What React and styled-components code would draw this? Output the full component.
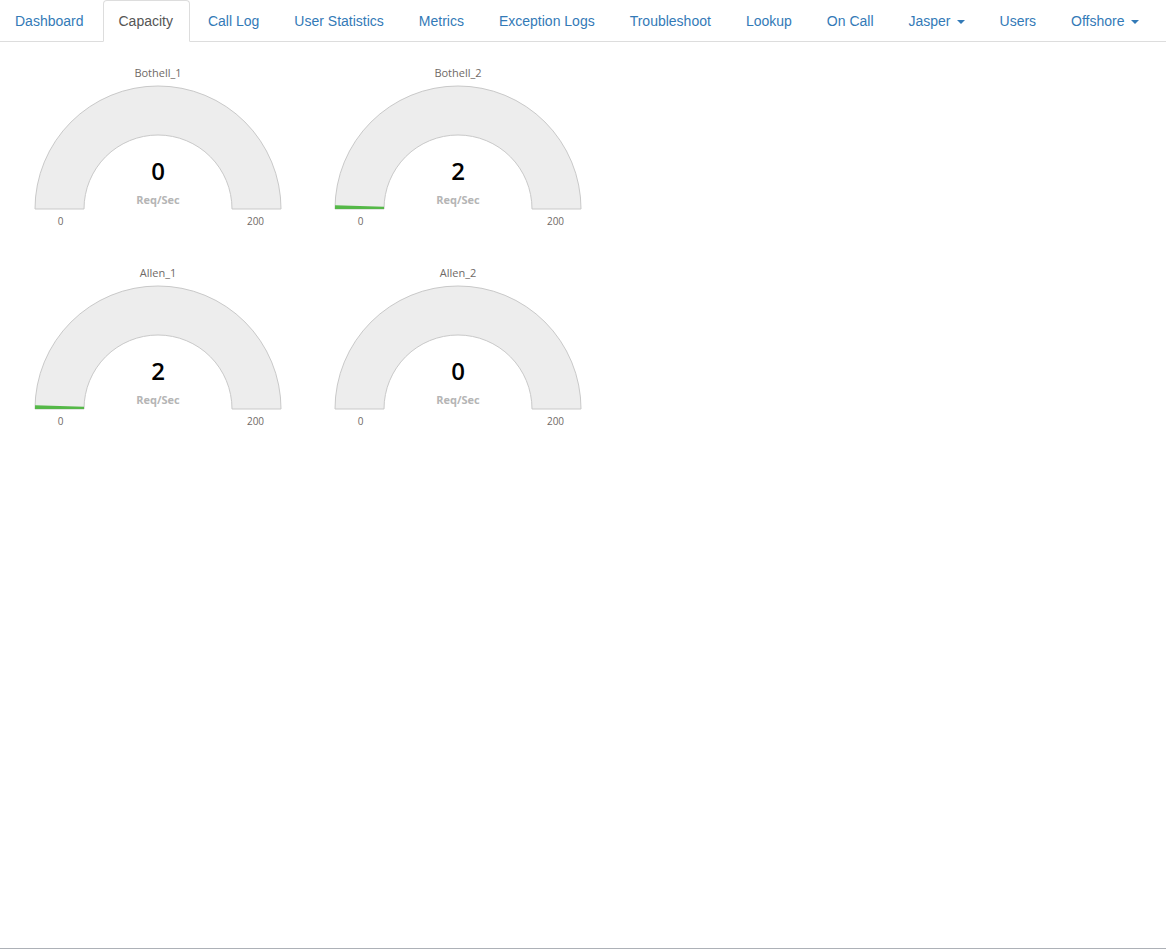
import React from 'react';
import styled, { createGlobalStyle } from 'styled-components';

const GlobalStyle = createGlobalStyle`
  html, body {
    margin: 0;
    padding: 0;
    background: #fff;
    font-family: "Liberation Sans", Arial, sans-serif;
    font-size: 14px;
    color: #333;
  }
`;

const Page = styled.div`
  min-height: 100vh;
  display: flex;
  flex-direction: column;
  box-sizing: border-box;
`;

const Tabs = styled.ul`
  display: flex;
  margin: 0;
  padding: 0 0 0 0;
  list-style: none;
  border-bottom: 1px solid #ddd;
`;

const Tab = styled.li`
  margin-bottom: -1px;
  margin-right: 2px;
  &:first-child {
    margin-left: -1px;
  }
`;

const TabLink = styled.a`
  display: flex;
  align-items: center;
  gap: 6px;
  height: 40px;
  padding: 0 16px 0 15px;
  line-height: 20px;
  color: ${p => (p.$active ? '#555' : '#337ab7')};
  background: ${p => (p.$active ? '#fff' : 'transparent')};
  border: 1px solid ${p => (p.$active ? '#ddd' : 'transparent')};
  border-bottom-color: ${p => (p.$active ? '#fff' : 'transparent')};
  border-radius: 4px 4px 0 0;
  text-decoration: none;
  cursor: pointer;
`;

const Caret = styled.span`
  width: 0;
  height: 0;
  border-top: 4px solid #337ab7;
  border-left: 4px solid transparent;
  border-right: 4px solid transparent;
  margin-top: 1px;
`;

const Grid = styled.div`
  display: grid;
  grid-template-columns: repeat(2, 300px);
  grid-auto-rows: 200px;
  padding: 8px 0 0 8px;
`;

const Footer = styled.div`
  margin-top: auto;
  border-bottom: 1px solid #adb1b7;
`;

const tabs = [
  { label: 'Dashboard' },
  { label: 'Capacity', active: true },
  { label: 'Call Log' },
  { label: 'User Statistics' },
  { label: 'Metrics' },
  { label: 'Exception Logs' },
  { label: 'Troubleshoot' },
  { label: 'Lookup' },
  { label: 'On Call' },
  { label: 'Jasper', menu: true },
  { label: 'Users' },
  { label: 'Offshore', menu: true },
];

const gauges = [
  { title: 'Bothell_1', value: 0 },
  { title: 'Bothell_2', value: 2 },
  { title: 'Allen_1', value: 2 },
  { title: 'Allen_2', value: 0 },
];

const CX = 150;
const CY = 159;
const R = 123;
const r = 74;
const MAX = 200;

const pt = (rad, a) => [CX - rad * Math.cos(a), CY - rad * Math.sin(a)];

const sector = frac => {
  const a = Math.PI * frac;
  const [ox1, oy1] = pt(R, 0);
  const [ox2, oy2] = pt(R, a);
  const [ix2, iy2] = pt(r, a);
  const [ix1, iy1] = pt(r, 0);
  const large = a > Math.PI ? 1 : 0;
  return `M${ox1} ${oy1} A${R} ${R} 0 ${large} 1 ${ox2} ${oy2} L${ix2} ${iy2} A${r} ${r} 0 ${large} 0 ${ix1} ${iy1} Z`;
};

const Gauge = ({ title, value }) => (
  <svg width="300" height="200" viewBox="0 0 300 200">
    <text x={CX} y="27" textAnchor="middle" fontFamily="'Open Sans', sans-serif" fontSize="11" fill="#6f6a66">
      {title}
    </text>
    <path d={sector(1)} fill="#ededed" stroke="#c9c9c9" strokeWidth="1" />
    {value > 0 && <path d={sector(value / MAX)} fill="#55b848" />}
    <text x={CX} y="130" textAnchor="middle" fontFamily="'Open Sans', sans-serif" fontWeight="600" fontSize="24" fill="#010101">
      {value}
    </text>
    <text x={CX} y="154" textAnchor="middle" fontFamily="'Open Sans', sans-serif" fontWeight="700" fontSize="11" fill="#b5b5b5">
      Req/Sec
    </text>
    <text x={CX - (R + r) / 2 + 1} y="175" textAnchor="middle" fontFamily="'Open Sans', sans-serif" fontSize="10" fill="#6f6a66">
      0
    </text>
    <text x={CX + (R + r) / 2 - 1} y="175" textAnchor="middle" fontFamily="'Open Sans', sans-serif" fontSize="10" fill="#6f6a66">
      {MAX}
    </text>
  </svg>
);

export default function App() {
  return (
    <Page>
      <GlobalStyle />
      <Tabs>
        {tabs.map(t => (
          <Tab key={t.label}>
            <TabLink $active={t.active}>
              {t.label}
              {t.menu && <Caret />}
            </TabLink>
          </Tab>
        ))}
      </Tabs>
      <Grid>
        {gauges.map(g => (
          <Gauge key={g.title} {...g} />
        ))}
      </Grid>
      <Footer />
    </Page>
  );
}
